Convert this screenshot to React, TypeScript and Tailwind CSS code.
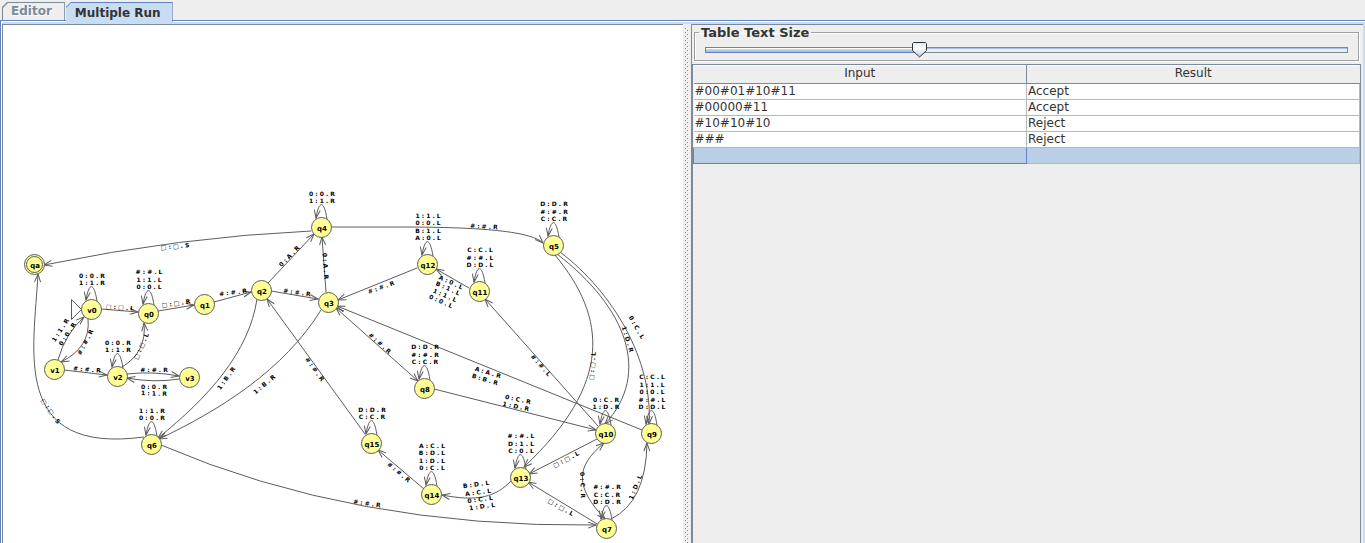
import React, { useState } from 'react';

type Loop = { lines: string[] };
type Node = { id: string; x: number; y: number; loop?: Loop; final?: boolean };

const nodes: Node[] = [
  { id: 'qa', x: 34, y: 264, final: true },
  { id: 'v0', x: 91, y: 309, loop: { lines: ['0 : 0 . R', '1 : 1 . R'] } },
  { id: 'q0', x: 148, y: 313, loop: { lines: ['# : # . L', '1 : 1 . L', '0 : 0 . L'] } },
  { id: 'q1', x: 204, y: 304 },
  { id: 'q2', x: 261, y: 290 },
  { id: 'q3', x: 328, y: 302 },
  { id: 'q4', x: 321, y: 227, loop: { lines: ['0 : 0 . R', '1 : 1 . R'] } },
  { id: 'q5', x: 553, y: 245, loop: { lines: ['D : D . R', '# : # . R', 'C : C . R'] } },
  { id: 'q12', x: 427, y: 264, loop: { lines: ['1 : 1 . L', '0 : 0 . L', 'B : 1 . L', 'A : 0 . L'] } },
  { id: 'q11', x: 479, y: 291, loop: { lines: ['C : C . L', '# : # . L', 'D : D . L'] } },
  { id: 'v1', x: 54, y: 369 },
  { id: 'v2', x: 117, y: 376, loop: { lines: ['0 : 0 . R', '1 : 1 . R'] } },
  { id: 'v3', x: 189, y: 377 },
  { id: 'q6', x: 151, y: 444, loop: { lines: ['1 : 1 . R', '0 : 0 . R'] } },
  { id: 'q8', x: 424, y: 388, loop: { lines: ['D : D . R', '# : # . R', 'C : C . R'] } },
  { id: 'q15', x: 371, y: 443, loop: { lines: ['D : D . R', 'C : C . R'] } },
  { id: 'q14', x: 431, y: 494, loop: { lines: ['A : C . L', 'B : D . L', '1 : D . L', '0 : C . L'] } },
  { id: 'q13', x: 520, y: 477, loop: { lines: ['# : # . L', 'D : 1 . L', 'C : 0 . L'] } },
  { id: 'q10', x: 605, y: 433, loop: { lines: ['0 : C . R', '1 : D . R'] } },
  { id: 'q9', x: 651, y: 433, loop: { lines: ['C : C . L', '1 : 1 . L', '0 : 0 . L', '# : # . L', 'D : D . L'] } },
  { id: 'q7', x: 606, y: 528, loop: { lines: ['# : # . R', 'C : C . R', 'D : D . R'] } },
];

const edges: { d: string; both?: boolean }[] = [
  { d: 'M311 231 Q180 237 44 265' },
  { d: 'M101 309 L138 312' },
  { d: 'M158 311 L194 305' },
  { d: 'M214 302 L251 292' },
  { d: 'M271 291 L318 299' },
  { d: 'M268 283 L314 234' },
  { d: 'M326 292 L322 237' },
  { d: 'M331 227 L400 227 C470 227 530 230 543 243' },
  { d: 'M417 268 L338 300' },
  { d: 'M469 288 L436 269' },
  { d: 'M58 360 Q65 334 84 317' },
  { d: 'M88 319 Q91 347 61 362' },
  { d: 'M64 370 L107 375' },
  { d: 'M122 367 Q147 352 144 323' },
  { d: 'M127 374 Q153 371 179 376' },
  { d: 'M179 379 Q153 383 127 378' },
  { d: 'M144 437 C10 455 34 350 38 274' },
  { d: 'M257 299 C249 352 209 397 158 438' },
  { d: 'M321 310 C284 370 220 410 159 439' },
  { d: 'M161 445 Q354 528 596 525' },
  { d: 'M365 434 L267 299' },
  { d: 'M336 308 L418 381', both: true },
  { d: 'M642 430 L337 306' },
  { d: 'M434 389 L596 430' },
  { d: 'M598 426 L485 299' },
  { d: 'M555 255 C607 318 613 383 524 467' },
  { d: 'M557 254 C626 307 652 373 605 424' },
  { d: 'M560 252 C614 293 653 361 649 424' },
  { d: 'M424 489 L378 450' },
  { d: 'M512 480 C496 497 478 502 442 495' },
  { d: 'M597 439 L529 474' },
  { d: 'M599 525 L528 482' },
  { d: 'M605 519 C575 487 575 467 604 443', both: true },
  { d: 'M611 519 Q646 502 647 443' },
];

const labels: { t: string; x: number; y: number; a: number }[] = [
  { t: '□ : □ . S', x: 175, y: 246, a: -5 },
  { t: '□ : □ . L', x: 120, y: 307, a: 4 },
  { t: '□ : □ . R', x: 176, y: 303, a: -8 },
  { t: '# : # . R', x: 233, y: 292, a: -7 },
  { t: '# : # . R', x: 297, y: 292, a: 8 },
  { t: '0 : A . R', x: 289, y: 256, a: -46 },
  { t: '0 : A . R', x: 326, y: 266, a: 86 },
  { t: '# : # . R', x: 484, y: 226, a: 3 },
  { t: '# : # . R', x: 381, y: 287, a: -20 },
  { t: 'A : 0 . L', x: 451, y: 282, a: 24 },
  { t: 'B : 1 . L', x: 448, y: 288, a: 24 },
  { t: '1 : 1 . L', x: 445, y: 295, a: 24 },
  { t: '0 : 0 . L', x: 441, y: 301, a: 24 },
  { t: '1 : 1 . R', x: 60, y: 330, a: -57 },
  { t: '0 : 0 . R', x: 67, y: 334, a: -57 },
  { t: '# : # . R', x: 85, y: 342, a: -62 },
  { t: '# : # . R', x: 87, y: 369, a: 5 },
  { t: '□ : □ . L', x: 141, y: 346, a: -66 },
  { t: '# : # . R', x: 154, y: 369, a: 0 },
  { t: '0 : 0 . R', x: 154, y: 386, a: 0 },
  { t: '1 : 1 . R', x: 154, y: 393, a: 2 },
  { t: '□ : □ . S', x: 51, y: 411, a: 55 },
  { t: '1 : B . R', x: 226, y: 378, a: -54 },
  { t: '1 : B . R', x: 264, y: 384, a: -40 },
  { t: '# : # . R', x: 367, y: 503, a: 8 },
  { t: '# : # . R', x: 315, y: 369, a: 54 },
  { t: '# : # . R', x: 380, y: 343, a: 42 },
  { t: 'A : A . R', x: 488, y: 372, a: 17 },
  { t: 'B : B . R', x: 485, y: 379, a: 17 },
  { t: '0 : C . R', x: 518, y: 399, a: 12 },
  { t: '1 : D . R', x: 516, y: 406, a: 12 },
  { t: '# : # . L', x: 541, y: 365, a: 48 },
  { t: '□ : □ . L', x: 592, y: 366, a: -85 },
  { t: '1 : D . R', x: 628, y: 339, a: 73 },
  { t: '0 : C . L', x: 637, y: 327, a: 60 },
  { t: '# : # . R', x: 399, y: 472, a: 40 },
  { t: 'B : D . L', x: 476, y: 484, a: -8 },
  { t: 'A : C . L', x: 478, y: 492, a: -8 },
  { t: '0 : C . L', x: 480, y: 499, a: -8 },
  { t: '1 : D . L', x: 482, y: 506, a: -8 },
  { t: '□ : □ . L', x: 566, y: 459, a: -27 },
  { t: '□ : □ . L', x: 561, y: 507, a: 30 },
  { t: '0 : C . R', x: 583, y: 485, a: 88 },
  { t: '1 : D . L', x: 635, y: 487, a: -68 },
];

function Diagram() {
  return (
    <svg
      role="img"
      aria-label="State diagram"
      className="block h-[518px] w-[680px] shrink-0 font-['DejaVu_Sans',sans-serif] font-bold"
      viewBox="3 25 680 518"
      fill="none"
      stroke="#5c5c5c"
    >
      <defs>
        <marker id="arrow" viewBox="-9 -5 10 10" markerWidth="10" markerHeight="10" markerUnits="userSpaceOnUse" orient="auto-start-reverse">
          <path d="M-8 -3 L0 0 L-8 3" fill="none" stroke="#5c5c5c" />
        </marker>
      </defs>
      {edges.map((e) => (
        <path key={e.d} d={e.d} markerEnd="url(#arrow)" markerStart={e.both ? 'url(#arrow)' : undefined} />
      ))}
      <path d="M81.500 309.500 L71.500 299.500 V319.500 Z" />
      {nodes.map((n) => (
        <g key={n.id}>
          {n.loop && (
            <path
              d={`M${n.x + 6} ${n.y - 8} C${n.x + 3} ${n.y - 27} ${n.x - 2} ${n.y - 27} ${n.x - 5} ${n.y - 9}`}
              markerEnd="url(#arrow)"
            />
          )}
          <circle cx={n.x + 0.5} cy={n.y + 0.5} r="10" fill="#ffff96" />
          {n.final && <circle cx={n.x + 0.5} cy={n.y + 0.5} r="8" />}
        </g>
      ))}
      <g fill="#000" stroke="none" textAnchor="middle" className="text-[6px]">
        {nodes.map((n) => (
          <text key={n.id} x={n.x + 1} y={n.y + 4} className="text-[7px]">
            {n.id}
          </text>
        ))}
        {nodes.map((n) =>
          n.loop?.lines.map((t, i, all) => (
            <text key={n.id + t} x={n.x + 1} y={Math.round(n.y - 24 - (all.length - 1 - i) * 7.5)}>
              {t}
            </text>
          )),
        )}
        {labels.map((l) => (
          <text key={`${l.x} ${l.y}`} dominantBaseline="central" transform={`translate(${l.x} ${l.y}) rotate(${l.a})`}>
            {l.t}
          </text>
        ))}
      </g>
    </svg>
  );
}

function Splitter() {
  return (
    <div role="separator" aria-orientation="vertical" className="flex justify-center overflow-hidden bg-[#eee] pt-1">
      <svg className="h-full w-1" aria-hidden="true">
        <defs>
          <pattern id="bumps" width="4" height="4" patternUnits="userSpaceOnUse">
            <path d="M0 0h1v1h-1z M2 2h1v1h-1z" fill="#6f87a5" />
            <path d="M1 1h1v1h-1z M3 3h1v1h-1z" fill="#fff" />
          </pattern>
        </defs>
        <rect width="4" height="100%" fill="url(#bumps)" stroke="none" />
      </svg>
    </div>
  );
}

const rows = [
  ['#00#01#10#11', 'Accept'],
  ['#00000#11', 'Accept'],
  ['#10#10#10', 'Reject'],
  ['###', 'Reject'],
];

function Tab({ label, selected, onSelect }: { label: string; selected: boolean; onSelect: () => void }) {
  return (
    <button
      type="button"
      role="tab"
      aria-selected={selected}
      onClick={onSelect}
      className={
        selected
          ? 'relative z-10 -mb-0.5 h-5 border-t border-r border-[#6382bf] bg-[linear-gradient(135deg,#6382bf_3px,#c8ddf2_4px)] pr-[11px] pl-[9px] text-[#333] [clip-path:polygon(5px_0,100%_0,100%_100%,0_100%,0_5px)]'
          : 'mr-px h-[18px] border-t border-r border-l border-[#7a8a99] bg-[linear-gradient(135deg,#7a8a99_3px,#eee_4px)] pr-3 pb-px pl-2 text-[#7a8a99] [clip-path:polygon(5px_0,100%_0,100%_100%,0_100%,0_5px)] [text-shadow:1px_1px_#fff]'
      }
    >
      {label}
    </button>
  );
}

function SizeSlider() {
  const [size, setSize] = useState(33);
  return (
    <fieldset className="mx-0.5 min-w-0 border border-[#a0a0a0] px-2.5 shadow-[1px_1px_#fff,inset_1px_1px_#fff]">
      <legend className="-ml-1.5 px-0.5 text-[13px] leading-[15px] font-bold">
        <label htmlFor="size">Table Text Size</label>
      </legend>
      <div className="relative flex h-5 items-center">
        <div className="flex h-1.5 w-full">
          <div
            className="border border-r-0 border-[#6382bf] bg-[linear-gradient(#fff_1px,#c8ddf2_1px,#a3b8cc)]"
            style={{ width: `${size}%` }}
          />
          <div className="grow border border-l-0 border-[#7a8a99] bg-[linear-gradient(#a3c0e4_1px,#eee_1px)]" />
        </div>
        <svg
          className="pointer-events-none absolute top-0.5 h-4 w-[15px]"
          style={{ left: `calc((100% - 15px) * ${size / 100})` }}
          viewBox="0 0 15 16"
          aria-hidden="true"
        >
          <defs>
            <linearGradient id="knob" x2="0" y2="1">
              <stop offset="0" stopColor="#dbe8f5" />
              <stop offset="0.4" stopColor="#fff" />
              <stop offset="1" stopColor="#b8cfe5" />
            </linearGradient>
          </defs>
          <path d="M1.500 0.500 H13.500 L14.500 1.500 V8.500 L7.500 15 L0.500 8.500 V1.500 Z" fill="url(#knob)" stroke="#333" />
        </svg>
        <input
          id="size"
          type="range"
          value={size}
          onChange={(e) => setSize(Number(e.target.value))}
          className="absolute inset-0 w-full appearance-none bg-transparent [&::-webkit-slider-thumb]:h-4 [&::-webkit-slider-thumb]:w-[15px] [&::-webkit-slider-thumb]:appearance-none"
        />
      </div>
    </fieldset>
  );
}

export default function App() {
  const [tab, setTab] = useState('Multiple Run');
  return (
    <div className="flex h-screen flex-col overflow-hidden bg-[#eee] font-['DejaVu_Sans',sans-serif] text-[#333]">
      <div role="tablist" className="flex h-5 shrink-0 items-end pl-0.5 text-[12px] leading-4 font-bold">
        {['Editor', 'Multiple Run'].map((t) => (
          <Tab key={t} label={t} selected={t === tab} onSelect={() => setTab(t)} />
        ))}
      </div>
      <main className="flex min-h-0 grow border-t border-l border-[#6382bf]">
        <div className="grid min-w-0 grow grid-cols-[680fr_8px_671fr] grid-rows-[minmax(0,1fr)] border-t border-l border-white bg-[#c8ddf2] pt-0.5 pr-0.5">
          <section className="flex min-w-0 overflow-hidden border-t border-l border-[#7a8a99] bg-white">
            <Diagram />
          </section>
          <Splitter />
          <section className="flex min-w-0 flex-col border-t border-l border-[#7a8a99] bg-[#eee] pr-0.5">
            <SizeSlider />
            <div className="mt-[3px] grow border-t border-r border-l border-[#7a8a99]">
              <table className="w-full table-fixed border-collapse text-[12px] leading-[15px]">
                <thead>
                  <tr className="h-[18px] shadow-[inset_0_1px_#fff]">
                    <th className="border-r border-b border-[#7a8a99] font-normal">Input</th>
                    <th className="border-b border-[#7a8a99] font-normal">Result</th>
                  </tr>
                </thead>
                <tbody className="bg-white">
                  {rows.map(([a, b]) => (
                    <tr key={a} className="h-4">
                      <td className="border-r border-b border-[#b8b8b8] px-px">{a}</td>
                      <td className="border-r border-b border-[#b8b8b8] px-px">{b}</td>
                    </tr>
                  ))}
                  <tr className="h-4 bg-[#b8cfe5]">
                    <td className="border border-[#6382bf]" />
                    <td className="border-r border-b border-[#b8b8b8]" />
                  </tr>
                </tbody>
              </table>
            </div>
          </section>
        </div>
      </main>
    </div>
  );
}
